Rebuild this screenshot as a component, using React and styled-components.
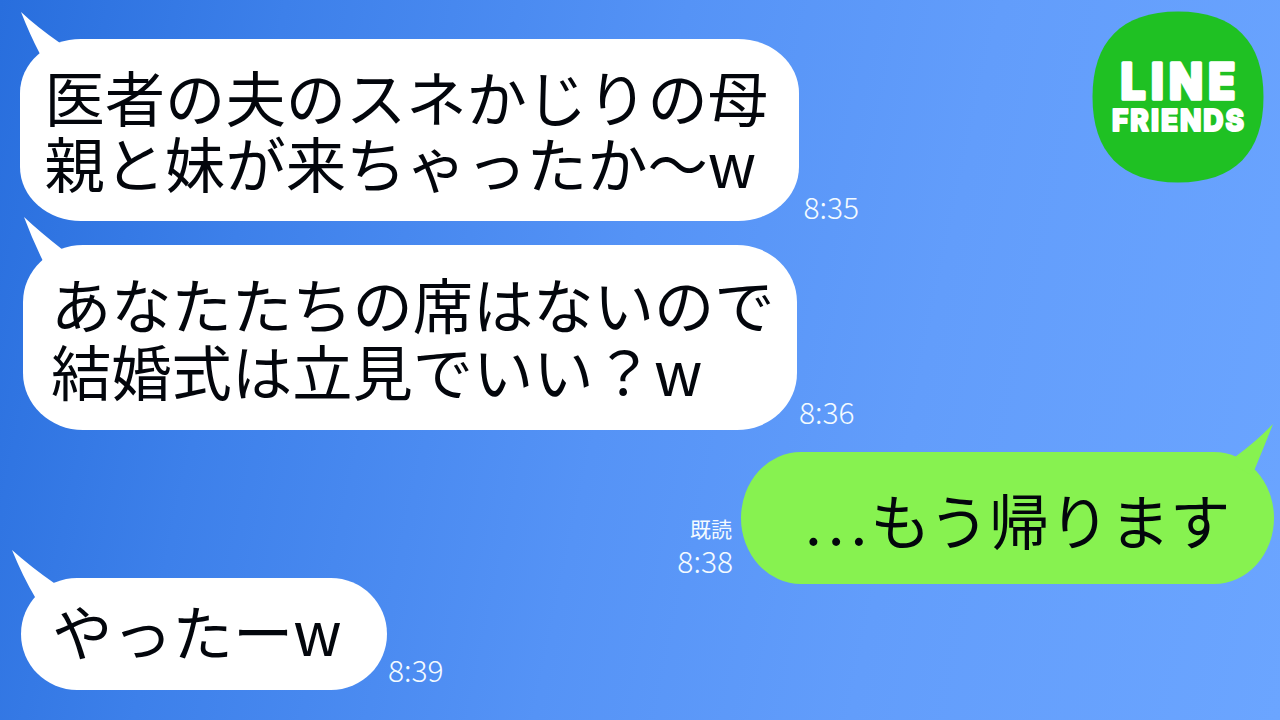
import styled, { createGlobalStyle } from "styled-components"

const GlobalStyle = createGlobalStyle`
* {
  box-sizing: border-box;
}
body {
  margin: 0;
  overflow: hidden;
}
`

export default function App() {
  return (
    <>
      <GlobalStyle />
      <Chat>
        <Top>
          <Received>
            <Row $left={20}>
              <Bubble $w={779} $h={182} $rx={61} $ry={54} $pad="24px 0 0 24.5px">
                <Tail $x={0} $y={-28} width="42" height="48" viewBox="0 0 42 48">
                  <path d="M1 1 Q17 16 40 32 L40 44 L21 46 L20 43 Q10 24 1 1Z" />
                </Tail>
                <Message>医者の夫のスネかじりの母<br />親と妹が来ちゃったか～w</Message>
              </Bubble>
              <Time $gap={4.5} $drop={-7}>8:35</Time>
            </Row>
            <Row $left={23}>
              <Bubble $w={774} $h={185} $rx={60} $ry={57} $pad="24px 0 0 28px">
                <Tail $x={0} $y={-29} width="42" height="48" viewBox="0 0 42 48">
                  <path d="M1 1 Q17 16 40 34 L40 45 L21 47 L20 45 Q10 25 1 1Z" />
                </Tail>
                <Message $line={67}>あなたたちの席はないので<br />結婚式は立見でいい？w</Message>
              </Bubble>
              <Time $gap={2} $drop={-3}>8:36</Time>
            </Row>
          </Received>
          <LineFriends />
        </Top>

        <SentRow>
          <Status>
            <Read>既読</Read>
            <Time>8:38</Time>
          </Status>
          <Bubble $sent $w={533} $h={132} $rx={60} $ry={66} $pad="34px 0 0 64px">
            <Tail $sent $x={492} $y={-29} width="42" height="54" viewBox="0 0 42 54">
              <path d="M40 1 Q31 24 21 48 L18 52 L1 42 L2 34 Q24 18 40 1Z" />
            </Tail>
            <Message><Dots>...</Dots>もう帰ります</Message>
          </Bubble>
        </SentRow>

        <Row $left={21}>
          <Bubble $w={366} $h={112} $rx={56} $ry={56} $pad="19px 0 0 31px">
            <Tail $x={-10} $y={-29} width="46" height="54" viewBox="0 0 46 54">
              <path d="M1 1 Q20 18 43 34 L44 44 L26 52 L24 48 Q12 28 1 1Z" />
            </Tail>
            <Message>やったーw</Message>
          </Bubble>
          <Time $gap={1} $drop={-1}>8:39</Time>
        </Row>
      </Chat>
    </>
  )
}

function LineFriends() {
  return (
    <Logo viewBox="0 0 172 172">
      <path
        d="M86 0.5 C143 0.5 171.5 31 171.5 86 C171.5 141 143 171.5 86 171.5 C29 171.5 0.5 141 0.5 86 C0.5 31 29 0.5 86 0.5Z"
        fill="#1fc123"
      />
      <LogoText x="28.5" y="88" fontSize="49.5" strokeWidth="3.6" letterSpacing="6" textLength="120" lengthAdjust="spacingAndGlyphs">LINE</LogoText>
      <LogoText x="20" y="120" fontSize="30.5" strokeWidth="2.2" letterSpacing="2.2" textLength="134" lengthAdjust="spacingAndGlyphs">FRIENDS</LogoText>
    </Logo>
  )
}

const Chat = styled.main`
width: 1280px;
height: 720px;
overflow: hidden;
background: linear-gradient(102deg, #286edd 0%, #3d80ea 20%, #5593f6 48%, #629dfb 70%, #6ba5ff 100%);
font-family: "Noto Sans CJK JP", sans-serif;
`
const Top = styled.div`
display: flex;
justify-content: space-between;
align-items: flex-start;
height: 452px;
`
const Received = styled.div`
display: flex;
flex-direction: column;
gap: 24px;
padding-top: 39px;
`
const Row = styled.div`
display: flex;
align-items: flex-end;
padding-left: ${(props) => props.$left}px;
`
const SentRow = styled.div`
display: flex;
justify-content: flex-end;
align-items: flex-end;
height: 132px;
padding-right: 6px;
margin-bottom: -6px;
`
const Bubble = styled.div`
position: relative;
flex: none;
width: ${(props) => props.$w}px;
height: ${(props) => props.$h}px;
padding: ${(props) => props.$pad};
border-radius: ${(props) => props.$rx}px / ${(props) => props.$ry}px;
background: ${(props) => (props.$sent ? "#87f250" : "#ffffff")};
`
/* pointed tail poking out of the bubble's corner */
const Tail = styled.svg`
position: absolute;
left: ${(props) => props.$x}px;
top: ${(props) => props.$y}px;
fill: ${(props) => (props.$sent ? "#87f250" : "#ffffff")};
`
const Message = styled.p`
position: relative;
margin: 0;
font-size: 60.3px;
line-height: ${(props) => props.$line || 66}px;
color: #03060c;
white-space: nowrap;
`
const Dots = styled.span`
letter-spacing: 6px;
margin-right: -3px;
`
const Time = styled.span`
margin-left: ${(props) => props.$gap || 0}px;
margin-bottom: ${(props) => props.$drop || 0}px;
font-size: 30px;
font-weight: 300;
line-height: 44px;
color: #f4fbff;
`
const Status = styled.div`
display: flex;
flex-direction: column;
align-items: flex-end;
margin: 0 8px 2px 0;
`
const Read = styled.span`
margin: 0 1px -2px 0;
font-size: 21px;
line-height: 24px;
color: #f4fbff;
`
const Logo = styled.svg`
width: 172px;
height: 172px;
margin: 11px 16px 0 0;
`
const LogoText = styled.text`
font-family: Inter, sans-serif;
font-weight: 800;
fill: #ffffff;
stroke: #ffffff;
stroke-linejoin: round;
`
